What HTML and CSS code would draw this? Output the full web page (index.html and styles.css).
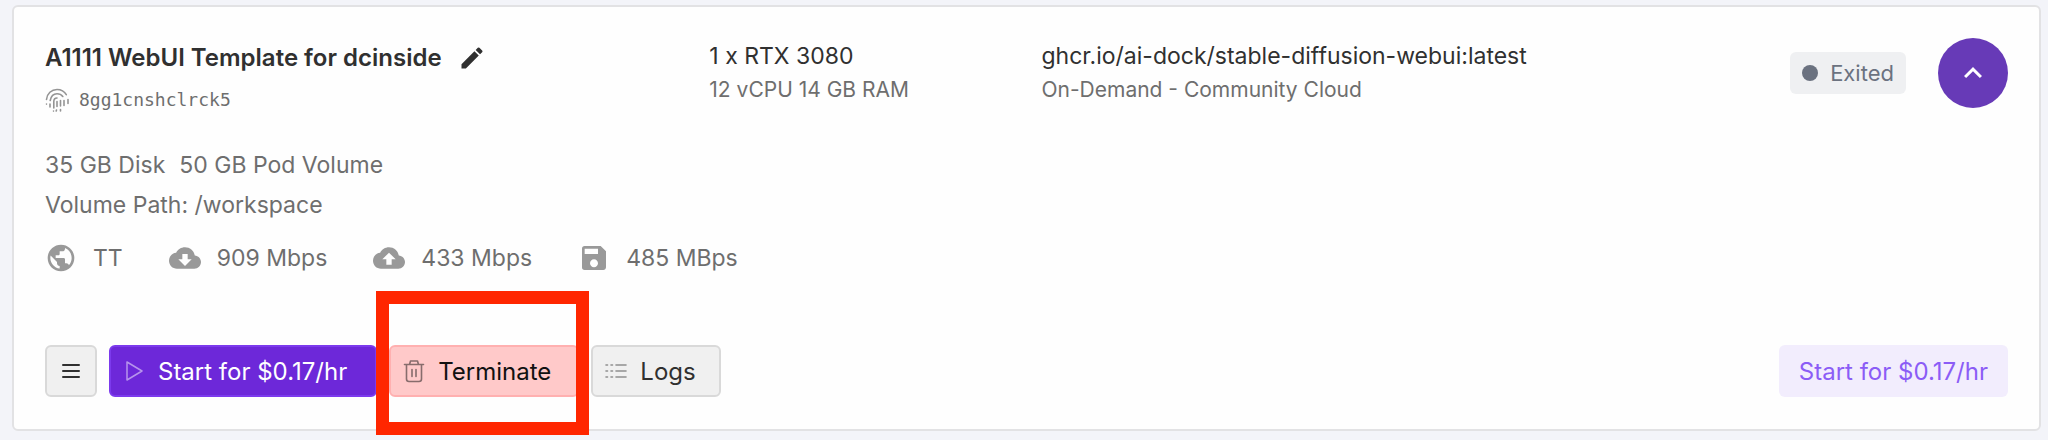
FILE: index.html
```html
<!DOCTYPE html>
<html lang="en">
<head>
  <meta charset="UTF-8" />
  <meta name="viewport" content="width=device-width, initial-scale=1.0" />
  <title>Pods</title>
  <link rel="stylesheet" href="styles.css">
</head>
<body>
  <main class="pod-card">
    <div class="pod-header">
      <div class="pod-name">
        <div class="title-row">
          <h1>A1111 WebUI Template for dcinside</h1>
          <button type="button" class="edit-btn" aria-label="Edit name">
            <svg width="28" height="28" viewBox="0 0 24 24" fill="currentColor"><path d="M3 17.25V21h3.75L17.81 9.94l-3.75-3.75L3 17.25zM20.71 7.04a1 1 0 0 0 0-1.41l-2.34-2.34a1 1 0 0 0-1.41 0l-1.83 1.83 3.75 3.75 1.83-1.83z"/></svg>
          </button>
        </div>
        <div class="pod-id">
          <svg width="24" height="24" viewBox="0 0 24 24" fill="none" stroke="currentColor" stroke-width="1.6" stroke-linecap="round">
            <path d="M1.5 11.5C2 5.5 6.500 1.500 12 1.500c4 0 7.500 2 9.300 5.200M1.500 16v.1M5 16v3M5.200 12.500C6 8.500 8.500 5.800 12 5.800c2.500 0 4.500 1 5.800 2.700M19 12.500v5M8.800 20v-6.500c0-2 1.300-3.500 3.200-3.500M15.500 12.500V18M12 13.500v5M11.500 22l-.3 1M15.500 21.500v1.500M23 11.500v4M8.500 23v.1"/>
          </svg>
          <span>8gg1cnshclrck5</span>
        </div>
      </div>
      <div class="pod-spec">
        <p class="main-text">1 x RTX 3080</p>
        <p class="sub-text">12 vCPU 14 GB RAM</p>
      </div>
      <div class="pod-image">
        <p class="main-text">ghcr.io/ai-dock/stable-diffusion-webui:latest</p>
        <p class="sub-text">On-Demand - Community Cloud</p>
      </div>
      <div class="pod-status">
        <span class="status-badge"><span class="status-dot"></span>Exited</span>
        <button type="button" class="collapse-btn" aria-label="Collapse">
          <svg width="36" height="36" viewBox="0 0 24 24" fill="currentColor"><path d="M7.41 15.41 12 10.83l4.59 4.58L18 14l-6-6-6 6z"/></svg>
        </button>
      </div>
    </div>

    <div class="pod-volume">
      <p><span>35 GB Disk</span><span>50 GB Pod Volume</span></p>
      <p>Volume Path: /workspace</p>
    </div>

    <ul class="pod-stats">
      <li>
        <svg width="32" height="32" viewBox="0 0 24 24" fill="currentColor"><path d="M12 2C6.48 2 2 6.48 2 12s4.48 10 10 10 10-4.48 10-10S17.52 2 12 2zm-1 17.93c-3.95-.49-7-3.85-7-7.93 0-.62.08-1.21.21-1.79L9 15v1c0 1.1.9 2 2 2v1.93zm6.9-2.54c-.26-.81-1-1.39-1.9-1.39h-1v-3c0-.55-.45-1-1-1H8v-2h2c.55 0 1-.45 1-1V7h2c1.1 0 2-.9 2-2v-.41c2.93 1.19 5 4.06 5 7.41 0 2.08-.8 3.97-2.1 5.39z"/></svg>
        TT
      </li>
      <li>
        <svg width="32" height="32" viewBox="0 0 24 24" fill="currentColor"><path d="M19.35 10.04C18.67 6.59 15.64 4 12 4 9.11 4 6.6 5.64 5.35 8.04 2.34 8.36 0 10.91 0 14c0 3.31 2.69 6 6 6h13c2.76 0 5-2.24 5-5 0-2.64-2.05-4.78-4.65-4.96zM17 13l-5 5-5-5h3V9h4v4h3z"/></svg>
        909 Mbps
      </li>
      <li>
        <svg width="32" height="32" viewBox="0 0 24 24" fill="currentColor"><path d="M19.35 10.04C18.67 6.59 15.64 4 12 4 9.11 4 6.6 5.64 5.35 8.04 2.34 8.36 0 10.91 0 14c0 3.31 2.69 6 6 6h13c2.76 0 5-2.24 5-5 0-2.64-2.05-4.78-4.65-4.96zM14 13v4h-4v-4H7l5-5 5 5h-3z"/></svg>
        433 Mbps
      </li>
      <li>
        <svg width="32" height="32" viewBox="0 0 24 24" fill="currentColor"><path d="M17 3H5a2 2 0 0 0-2 2v14a2 2 0 0 0 2 2h14c1.1 0 2-.9 2-2V7l-4-4zm-5 16c-1.66 0-3-1.34-3-3s1.34-3 3-3 3 1.34 3 3-1.34 3-3 3zm3-10H5V5h10v4z"/></svg>
        485 MBps
      </li>
    </ul>

    <div class="pod-actions">
      <button type="button" class="btn btn-menu" aria-label="Menu">
        <svg width="20" height="20" viewBox="0 0 20 20" stroke="currentColor" stroke-width="2" stroke-linecap="round"><path d="M2 4h16M2 10h16M2 16h16"/></svg>
      </button>
      <button type="button" class="btn btn-start">
        <svg width="24" height="24" viewBox="0 0 24 24" fill="none" stroke="currentColor" stroke-width="1.5" stroke-linejoin="round"><path d="M5 3v18l15-9z"/></svg>
        Start for $0.17/hr
      </button>
      <div class="highlight">
        <button type="button" class="btn btn-terminate">
          <svg width="24" height="24" viewBox="0 0 24 24" fill="none" stroke="currentColor" stroke-width="1.6" stroke-linecap="round" stroke-linejoin="round"><path d="M2.500 5.500h19M7.500 5.500l1-3.500h7l1 3.500M4.500 5.500V20q0 2.500 2.500 2.500h10q2.500 0 2.500-2.500V5.500M10 10.500v7M14 10.500v7"/></svg>
          Terminate
        </button>
      </div>
      <button type="button" class="btn">
        <svg width="24" height="24" viewBox="0 0 24 24" stroke="currentColor" stroke-width="1.6" stroke-linecap="round"><path d="M2 6h1.500M7 6h1.500M12 6h10M2 12h1.500M7 12h1.500M12 12h10M2 18h1.500M7 18h1.500M12 18h10"/></svg>
        Logs
      </button>
      <button type="button" class="btn-price">Start for $0.17/hr</button>
    </div>
  </main>
</body>
</html>
```
FILE: styles.css
```css
* {
  box-sizing: border-box;
}

body {
  margin: 0;
  padding: 5px 7px 8px 12px;
  background: #f3f4f9;
  font-family: Inter, sans-serif;
  color: #6e6e6e;
}

h1, p, ul {
  margin: 0;
  padding: 0;
}

button {
  font-family: inherit;
  cursor: pointer;
}

svg {
  flex: none;
}

.pod-card {
  background: #fefefe;
  border: 2px solid #e2e2e4;
  border-radius: 6px;
  padding: 31px 31px 32px;
}

.pod-header {
  display: grid;
  grid-template-columns: repeat(6, 1fr);
  column-gap: 30px;
}

.pod-name, .pod-image {
  grid-column: span 2;
}

.title-row {
  display: flex;
  align-items: center;
  gap: 16px;
}

h1 {
  font-size: 24px;
  line-height: 40px;
  font-weight: 600;
  color: #303030;
}

.edit-btn {
  display: flex;
  padding: 0;
  border: none;
  background: none;
  color: #303030;
}

.pod-id {
  display: flex;
  align-items: center;
  gap: 10px;
  margin-top: 10px;
  font-family: "DejaVu Sans Mono", monospace;
  font-size: 18px;
  line-height: 24px;
}

.pod-id svg {
  color: #949494;
}

.main-text {
  font-size: 23px;
  line-height: 36px;
  color: #303030;
}

.sub-text {
  font-size: 21px;
  line-height: 32px;
}

.pod-status {
  display: flex;
  justify-content: flex-end;
  align-items: center;
  align-self: start;
  gap: 32px;
}

.status-badge {
  display: flex;
  align-items: center;
  gap: 12px;
  padding: 5px 12px;
  border-radius: 6px;
  background: #eff0f2;
  color: #6b7280;
  font-size: 22px;
  line-height: 32px;
}

.status-dot {
  width: 16px;
  height: 16px;
  border-radius: 50%;
  background: #6b7280;
}

.collapse-btn {
  display: flex;
  align-items: center;
  justify-content: center;
  width: 70px;
  height: 70px;
  padding: 0;
  border: none;
  border-radius: 50%;
  background: #673ab7;
  color: #fff;
}

.pod-volume {
  margin-top: 33px;
  font-size: 23px;
  line-height: 40px;
}

.pod-volume p {
  display: flex;
  gap: 14px;
}

.pod-stats {
  display: flex;
  gap: 46px;
  margin-top: 17px;
  list-style: none;
  font-size: 23px;
  line-height: 32px;
}

.pod-stats li {
  display: flex;
  align-items: center;
  gap: 16px;
}

.pod-stats svg {
  color: #999;
}

.pod-actions {
  display: flex;
  align-items: center;
  gap: 12px;
  margin-top: 71px;
}

.btn {
  display: flex;
  align-items: center;
  gap: 12px;
  height: 52px;
  padding: 0 23px 0 11px;
  border: 2px solid #d9d9d9;
  border-radius: 6px;
  background: #f0f0f0;
  color: #303030;
  font-size: 24px;
}

.btn svg {
  opacity: 0.5;
}

.btn-menu {
  padding: 0 14px;
}

.btn-menu svg {
  opacity: 1;
}

.btn-start {
  padding-right: 28px;
  border-color: #7c3aed;
  background: #6d28d9;
  color: #fff;
}

.btn-terminate {
  padding-right: 26px;
  border-color: #ffb0b0;
  background: #ffc9c9;
  color: #111;
}

/* red frame around the terminate button */
.highlight {
  position: relative;
}

.highlight::after {
  content: "";
  position: absolute;
  inset: -54px -10px -38px -13px;
  border: 13px solid #ff2600;
  pointer-events: none;
}

.btn-price {
  height: 52px;
  margin-left: auto;
  padding: 0 20px;
  border: none;
  border-radius: 6px;
  background: #f2edfd;
  color: #8b5cf6;
  font-size: 24px;
}
```
